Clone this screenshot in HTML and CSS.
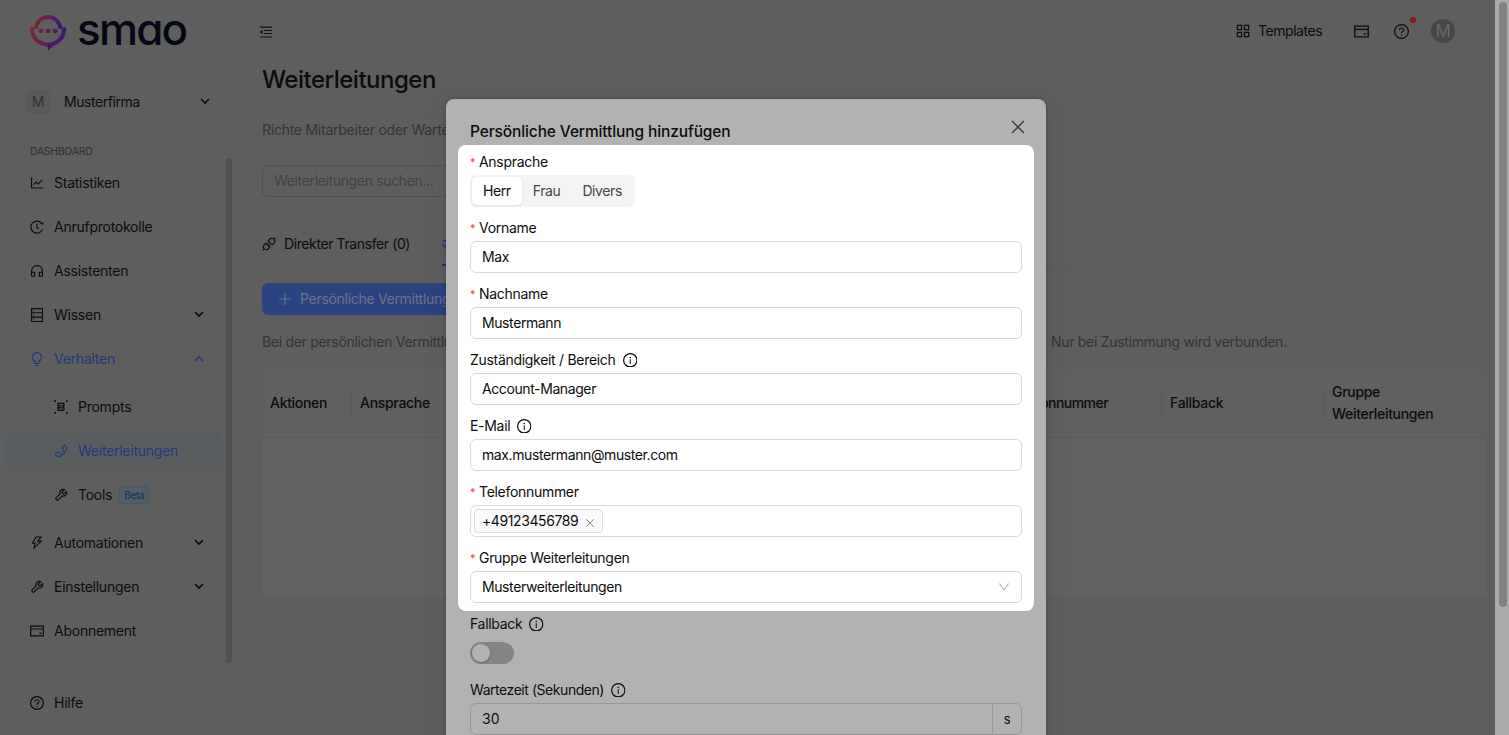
FILE: index.html
```html
<!DOCTYPE html>
<html lang="de">
<head>
    <meta charset="UTF-8">
    <meta name="viewport" content="width=device-width, initial-scale=1.0">
    <title>Weiterleitungen</title>
    <link rel="stylesheet" href="styles.css">
</head>
<body>
    <!-- Icons -->
    <svg class="sprite">
        <defs>
            <linearGradient id="logo-gradient" x1="0" x2="1" y1="0.3" y2="0.5">
                <stop offset="0" stop-color="#7a2a30"/>
                <stop offset="0.4" stop-color="#6e1a56"/>
                <stop offset="1" stop-color="#3a1a78"/>
            </linearGradient>
        </defs>
        <symbol id="i-chart" viewBox="64 64 896 896"><path d="M888 792H200V168c0-4.400-3.600-8-8-8h-56c-4.400 0-8 3.600-8 8v688c0 4.400 3.600 8 8 8h752c4.400 0 8-3.600 8-8v-56c0-4.400-3.600-8-8-8zM305.800 637.700c3.100 3.100 8.100 3.100 11.300 0l138.300-137.600L583 628.500c3.100 3.100 8.200 3.100 11.300 0l275.400-275.300c3.100-3.100 3.100-8.200 0-11.300l-39.600-39.600a8 8 0 0 0-11.300 0l-230 229.900L461.400 404a8 8 0 0 0-11.300 0L266.300 586.700a8 8 0 0 0 0 11.300l39.500 39.700z"/></symbol>
        <symbol id="i-history" viewBox="64 64 896 896"><path d="M826 300A385 385 0 1 0 872 650M500 310V535L640 640" fill="none" stroke="currentColor" stroke-width="72"/><path d="M745 325L905 365L915 190Z"/></symbol>
        <symbol id="i-headphones" viewBox="64 64 896 896"><path d="M164 850V520C164 320 310 164 512 164S860 320 860 520V850H660V590H850M174 590H364V850H164" fill="none" stroke="currentColor" stroke-width="74" stroke-linejoin="round"/></symbol>
        <symbol id="i-database" viewBox="64 64 896 896"><path d="M164 100H860V924H164ZM164 370H860M164 650H860" fill="none" stroke="currentColor" stroke-width="72"/><path d="M270 205h65v65h-65zM270 477h65v65h-65zM270 755h65v65h-65z"/></symbol>
        <symbol id="i-bulb" viewBox="64 64 896 896"><path d="M632 888H392c-4.400 0-8 3.600-8 8v32c0 17.700 14.300 32 32 32h192c17.700 0 32-14.300 32-32v-32c0-4.400-3.600-8-8-8zM512 64c-181.100 0-328 146.900-328 328 0 121.400 66 227.400 164 284.100V792c0 17.700 14.300 32 32 32h264c17.700 0 32-14.300 32-32V676.100c98-56.700 164-162.700 164-284.100 0-181.100-146.900-328-328-328zm127.900 549.800L604 634.600V752H420V634.600l-35.900-20.800C305.400 568.300 256 484.500 256 392c0-141.400 114.600-256 256-256s256 114.600 256 256c0 92.500-49.400 176.300-128.100 221.800z"/></symbol>
        <symbol id="i-prompts" viewBox="64 64 896 896"><path d="M80 80h110v110H80zM834 80h110v110H834zM80 834h110v110H80zM834 834h110v110H834z"/><path d="M325 285H700V430H325ZM325 570H700V730H325ZM345 430V570M680 430V570" fill="none" stroke="currentColor" stroke-width="76"/></symbol>
        <symbol id="i-phone" viewBox="64 64 896 896"><path d="M877.100 238.700L770.600 132.300c-13-13-30.400-20.300-48.800-20.300s-35.800 7.200-48.800 20.300L558.300 246.800c-13 13-20.300 30.500-20.300 48.900 0 18.500 7.200 35.800 20.300 48.900l89.600 89.700a405.460 405.460 0 0 1-86.400 127.300c-36.700 36.900-79.600 66-127.200 86.600l-89.600-89.700c-13-13-30.400-20.300-48.800-20.300a68.200 68.200 0 0 0-48.800 20.300L132.300 673c-13 13-20.300 30.500-20.300 48.900 0 18.500 7.200 35.800 20.300 48.900l106.400 106.400c22.200 22.200 52.800 34.900 84.200 34.900 6.500 0 12.800-.5 19.200-1.600 132.400-21.800 263.800-92.300 369.900-198.300C818 606 888.400 474.600 910.400 342.100c6.300-37.600-6.300-76.300-33.300-103.400zm-37.600 91.500c-19.500 117.900-82.900 235.500-178.400 331s-213 158.900-330.900 178.400c-14.800 2.500-30-2.500-40.800-13.200L184.900 721.900 295.700 611l119.800 120 .9.9 21.600-8a481.290 481.290 0 0 0 285.700-285.800l8-21.600-120.800-120.700 110.800-110.900 104.500 104.500c10.800 10.800 15.800 26 13.300 40.800z"/></symbol>
        <symbol id="i-tool" viewBox="64 64 896 896"><path d="M876.600 239.500c-.5-.9-1.200-1.800-2-2.500-5-5-13.100-5-18.100 0L684.200 409.300l-67.900-67.900L788.700 169c.8-.8 1.400-1.600 2-2.500 3.600-6.100 1.600-13.900-4.500-17.500-98.200-58-226.800-44.700-311.300 39.700-67 67-89.200 162-66.500 247.400l-293 293c-3 3-2.800 7.900.3 11l169.700 169.700c3.100 3.100 8.100 3.300 11 .3l292.900-292.900c85.500 22.800 180.500.7 247.600-66.400 84.400-84.500 97.700-213.100 39.700-311.300zM786 499.800c-58.100 58.100-145.300 69.300-214.600 33.600l-8.800 8.800-.1-.1-274 274.100-79.200-79.200 230.100-230.100s0 .1.1.1l52.800-52.800c-35.700-69.300-24.500-156.500 33.600-214.600a184.200 184.200 0 0 1 144-53.500L537 318.900a32 32 0 0 0 0 45.300l124.500 124.500a32 32 0 0 0 45.300 0l132.800-132.800c3.700 51.800-14.400 104.800-53.600 143.900z"/></symbol>
        <symbol id="i-bolt" viewBox="64 64 896 896"><path d="M848 359.300H627.700L825.800 109c4.100-5.300.4-13-6.300-13H436c-2.800 0-5.500 1.500-6.900 4L170 547.500c-3.100 5.300.7 12 6.900 12h174.400l-89.400 357.600c-1.900 7.800 7.500 13.300 13.300 7.700L853.500 373c5.200-4.900 1.700-13.700-5.500-13.700zM378.200 732.500l60.300-241H281.100l189.600-327.400h224.600L487 427.400h211L378.200 732.500z"/></symbol>
        <symbol id="i-card" viewBox="64 64 896 896"><path d="M110 196H914V828H110ZM110 385H914" fill="none" stroke="currentColor" stroke-width="76"/><path d="M650 620h145v76H650z"/></symbol>
        <symbol id="i-help" viewBox="64 64 896 896"><circle cx="512" cy="512" r="410" fill="none" stroke="currentColor" stroke-width="76"/><path d="M623.600 316.700C593.600 290.400 554 276 512 276s-81.600 14.500-111.600 40.700C369.200 344 352 380.700 352 420v7.600c0 4.400 3.600 8 8 8h48c4.400 0 8-3.600 8-8V420c0-44.100 43.100-80 96-80s96 35.900 96 80c0 31.100-22 59.600-56.100 72.700-21.200 8.100-39.200 22.300-52.100 40.900-13.100 19-19.900 41.800-19.900 64.900V620c0 4.400 3.600 8 8 8h48c4.400 0 8-3.600 8-8v-22.700a48.300 48.300 0 0 1 30.900-44.800c59-22.700 97.100-74.700 97.100-132.500.1-39.300-17.100-76-48.300-103.300zM472 732a40 40 0 1 0 80 0 40 40 0 1 0-80 0z"/></symbol>
        <symbol id="i-info" viewBox="64 64 896 896"><circle cx="512" cy="512" r="410" fill="none" stroke="currentColor" stroke-width="76"/><path d="M464 336a48 48 0 1 0 96 0 48 48 0 1 0-96 0zM480 448h64v288h-64z"/></symbol>
        <symbol id="i-apps" viewBox="64 64 896 896"><path d="M150 150H420V420H150ZM604 150H874V420H604ZM150 604H420V874H150ZM604 604H874V874H604Z" fill="none" stroke="currentColor" stroke-width="74"/></symbol>
        <symbol id="i-fold" viewBox="64 64 896 896"><path d="M120 160H904V232H120ZM408 378H904V450H408ZM408 574H904V646H408ZM120 792H904V864H120ZM115 512L300 370V654Z"/></symbol>
        <symbol id="i-api" viewBox="64 64 896 896"><path d="M460 310L580 190Q700 90 820 205Q935 325 835 445L715 565ZM310 460L190 580Q90 700 205 820Q325 935 445 835L565 715ZM830 195L925 100M195 830L100 925M395 540L475 460M490 635L570 555" fill="none" stroke="currentColor" stroke-width="72"/></symbol>
        <symbol id="i-swap" viewBox="64 64 896 896"><path d="M100 380H900L700 180M924 640H124L324 840" fill="none" stroke="currentColor" stroke-width="76"/></symbol>
        <symbol id="i-chevron" viewBox="0 0 10 10"><path d="M1 3L5 7L9 3" fill="none" stroke="currentColor" stroke-width="1.600"/></symbol>
        <symbol id="i-down" viewBox="64 64 896 896"><path d="M884 256h-75c-5.100 0-9.900 2.500-12.900 6.600L512 654.200 227.900 262.600c-3-4.100-7.800-6.600-12.900-6.600h-75c-6.500 0-10.300 7.400-6.500 12.700l352.600 486.100c12.800 17.600 39 17.600 51.700 0l352.600-486.100c3.900-5.300.1-12.700-6.400-12.700z"/></symbol>
        <symbol id="i-close" viewBox="0 0 16 16"><path d="M2 2L14 14M14 2L2 14" fill="none" stroke="currentColor" stroke-width="1.400"/></symbol>
        <symbol id="i-plus" viewBox="0 0 14 14"><path d="M7 1V13M1 7H13" fill="none" stroke="currentColor" stroke-width="1.200"/></symbol>
    </svg>

    <div class="app">
        <aside class="sidebar">
            <div class="logo">
                <svg class="logo-mark" viewBox="0 0 38 38">
                    <g fill="none" stroke="url(#logo-gradient)" stroke-width="4">
                        <path d="M6.600 14.700C8 7.500 12.500 3 19 3S30.200 7.500 31.500 14.700"/>
                        <path d="M1.200 15.200H5.200M2.900 15A16 15.500 0 0 0 35.100 15M32.500 15.200H37"/>
                    </g>
                    <path d="M18.500 31L28 28L19 37Z" fill="#4c1866"/>
                    <circle cx="12" cy="17" r="2.300" fill="#6e1c4a"/>
                    <circle cx="19" cy="17" r="2.300" fill="#5e1a58"/>
                    <circle cx="26" cy="17" r="2.300" fill="#4a1a68"/>
                </svg>
                <span class="logo-text">smao</span>
            </div>
            <div class="company">
                <span class="company-badge">M</span>
                <span class="company-name">Musterfirma</span>
                <svg class="chevron"><use href="#i-chevron"/></svg>
            </div>
            <div class="nav-title">DASHBOARD</div>
            <div class="nav-area">
                <nav class="nav">
                    <a class="nav-item"><svg class="icon"><use href="#i-chart"/></svg><span>Statistiken</span></a>
                    <a class="nav-item"><svg class="icon"><use href="#i-history"/></svg><span>Anrufprotokolle</span></a>
                    <a class="nav-item"><svg class="icon"><use href="#i-headphones"/></svg><span>Assistenten</span></a>
                    <a class="nav-item"><svg class="icon"><use href="#i-database"/></svg><span>Wissen</span><svg class="chevron"><use href="#i-chevron"/></svg></a>
                    <a class="nav-item open"><svg class="icon"><use href="#i-bulb"/></svg><span>Verhalten</span><svg class="chevron up"><use href="#i-chevron"/></svg></a>
                    <div class="subnav">
                        <a class="nav-item"><svg class="icon"><use href="#i-prompts"/></svg><span>Prompts</span></a>
                        <a class="nav-item active"><svg class="icon"><use href="#i-phone"/></svg><span>Weiterleitungen</span></a>
                        <a class="nav-item"><svg class="icon"><use href="#i-tool"/></svg><span>Tools</span><span class="beta">Beta</span></a>
                    </div>
                    <a class="nav-item"><svg class="icon"><use href="#i-bolt"/></svg><span>Automationen</span><svg class="chevron"><use href="#i-chevron"/></svg></a>
                    <a class="nav-item"><svg class="icon"><use href="#i-tool"/></svg><span>Einstellungen</span><svg class="chevron"><use href="#i-chevron"/></svg></a>
                    <a class="nav-item"><svg class="icon"><use href="#i-card"/></svg><span>Abonnement</span></a>
                </nav>
                <div class="nav-scroll"></div>
            </div>
            <a class="nav-item help"><svg class="icon"><use href="#i-help"/></svg><span>Hilfe</span></a>
        </aside>

        <main class="main">
            <header class="topbar">
                <svg class="icon fold"><use href="#i-fold"/></svg>
                <div class="topbar-right">
                    <svg class="icon"><use href="#i-apps"/></svg>
                    <span class="templates">Templates</span>
                    <svg class="icon top-card"><use href="#i-card"/></svg>
                    <span class="top-help"><svg class="icon"><use href="#i-help"/></svg><i class="dot"></i></span>
                    <span class="avatar">M</span>
                </div>
            </header>
            <h1>Weiterleitungen</h1>
            <p class="intro">Richte Mitarbeiter oder Warte</p>
            <div class="search">Weiterleitungen suchen...</div>
            <div class="tabs">
                <div class="tab"><svg class="icon"><use href="#i-api"/></svg><span>Direkter Transfer (0)</span></div>
                <div class="tab tab-active"><svg class="icon"><use href="#i-swap"/></svg></div>
            </div>
            <button class="add-button"><svg class="icon"><use href="#i-plus"/></svg><span>Persönliche Vermittlung</span></button>
            <p class="hint"><span class="hint-start">Bei der persönlichen Vermittlung</span><span>Nur bei Zustimmung wird verbunden.</span></p>
            <div class="table">
                <div class="table-head">
                    <div class="th">Aktionen</div>
                    <div class="th">Ansprache</div>
                    <div class="th th-phone">Telefonnummer</div>
                    <div class="th">Fallback</div>
                    <div class="th">Gruppe Weiterleitungen</div>
                </div>
                <div class="table-body"></div>
            </div>
        </main>

        <div class="page-scroll"><div class="page-thumb"></div></div>
    </div>

    <div class="modal">
        <div class="modal-head">
            <h2>Persönliche Vermittlung hinzufügen</h2>
            <svg class="close"><use href="#i-close"/></svg>
        </div>
        <div class="highlight">
            <div class="field">
                <label class="required">Ansprache</label>
                <div class="segmented">
                    <span class="segment selected">Herr</span>
                    <span class="segment">Frau</span>
                    <span class="segment">Divers</span>
                </div>
            </div>
            <div class="field">
                <label class="required">Vorname</label>
                <div class="input">Max</div>
            </div>
            <div class="field">
                <label class="required">Nachname</label>
                <div class="input">Mustermann</div>
            </div>
            <div class="field">
                <label>Zuständigkeit / Bereich<svg class="icon info"><use href="#i-info"/></svg></label>
                <div class="input">Account-Manager</div>
            </div>
            <div class="field">
                <label>E-Mail<svg class="icon info"><use href="#i-info"/></svg></label>
                <div class="input">max.mustermann@muster.com</div>
            </div>
            <div class="field">
                <label class="required">Telefonnummer</label>
                <div class="input tags"><span class="tag">+49123456789<svg class="tag-close"><use href="#i-close"/></svg></span></div>
            </div>
            <div class="field">
                <label class="required">Gruppe Weiterleitungen</label>
                <div class="input select">Musterweiterleitungen<svg class="select-arrow"><use href="#i-down"/></svg></div>
            </div>
        </div>
        <div class="rest">
            <div class="field">
                <label>Fallback<svg class="icon info"><use href="#i-info"/></svg></label>
                <div class="switch-row"><div class="switch"></div></div>
            </div>
            <div class="field">
                <label class="wait">Wartezeit (Sekunden)<svg class="icon info"><use href="#i-info"/></svg></label>
                <div class="input number"><span class="number-value">30</span><span class="addon">s</span></div>
            </div>
        </div>
    </div>
</body>
</html>
```
FILE: styles.css
```css
* {
    box-sizing: border-box;
}
body {
    margin: 0;
    height: 735px;
    overflow: hidden;
    position: relative;
    background: #5e5e5e;
    color: #0c0c0c;
    font-family: Inter, "Liberation Sans", sans-serif;
    font-size: 14px;
    line-height: 22px;
    letter-spacing: -0.3px;
}
svg {
    flex: none;
    fill: currentColor;
}
.sprite {
    position: absolute;
    width: 0;
    height: 0;
}
.icon {
    width: 14px;
    height: 14px;
}
.app {
    display: flex;
    height: 735px;
}

/* Sidebar */
.sidebar {
    width: 238px;
    flex: none;
    border-right: 1px solid #5a5a5a;
}
.logo {
    display: flex;
    align-items: center;
    height: 64px;
    padding-left: 29px;
}
.logo-mark {
    width: 38px;
    height: 38px;
    margin-top: 2px;
}
.logo-text {
    margin: -7px 0 0 10px;
    font-size: 44px;
    line-height: 50px;
    font-weight: 500;
    letter-spacing: -1.8px;
    font-feature-settings: "cv11";
    color: #040814;
}
.company {
    display: flex;
    align-items: center;
    height: 24px;
    margin-top: 26px;
    padding: 0 27px 0 26px;
}
.company-badge {
    width: 24px;
    height: 24px;
    border-radius: 5px;
    background: #595959;
    color: #323232;
    line-height: 24px;
    text-align: center;
}
.company-name {
    margin-left: 14px;
    letter-spacing: -0.45px;
}
.chevron {
    width: 10px;
    height: 10px;
    margin-left: auto;
    margin-top: -2px;
}
.up {
    margin-top: 0;
    transform: rotate(180deg);
}
.nav-title {
    margin-top: 27px;
    margin-bottom: -1px;
    padding-left: 30px;
    font-size: 10.5px;
    color: #303030;
}
.nav-area {
    display: flex;
    height: 510px;
}
.nav {
    width: 226px;
    padding-top: 1px;
}
.nav-scroll {
    width: 6px;
    height: 505px;
    margin-top: -4px;
    border-radius: 3px;
    background: #505050;
}
.nav-item {
    display: flex;
    align-items: center;
    height: 40px;
    margin: 0 4px 4px 5px;
    padding: 0 18px 0 25px;
    border-radius: 8px;
    letter-spacing: -0.25px;
}
.nav-item .icon {
    margin-right: 10px;
}
.subnav {
    padding: 4px 0;
}
.subnav .nav-item {
    padding-left: 49px;
}
.open {
    color: #24397c;
}
.active {
    background: #595d60;
    color: #24397c;
}
.beta {
    margin-left: 7px;
    padding: 0 4px;
    height: 18px;
    border: 1px solid #385a78;
    border-radius: 4px;
    background: #565c60;
    color: #12386e;
    font-size: 10px;
    font-weight: 500;
    line-height: 16px;
    letter-spacing: -0.4px;
}
.help {
    margin-top: 11px;
}

/* Main area */
.main {
    width: 1257px;
    padding: 0 9px 0 24px;
}
.topbar {
    display: flex;
    align-items: center;
    height: 62px;
}
.topbar .fold {
    margin: 2px 0 0 -3px;
}
.topbar-right {
    display: flex;
    align-items: center;
    margin-left: auto;
    margin-right: 31px;
}
.templates {
    width: 64px;
    margin-left: 8px;
    letter-spacing: -0.45px;
    white-space: nowrap;
}
.top-card {
    margin-left: 32px;
    width: 15px;
    height: 15px;
}
.top-help {
    position: relative;
    display: flex;
    margin-left: 25px;
}
.top-help .icon {
    width: 15px;
    height: 15px;
}
.dot {
    position: absolute;
    top: -7px;
    right: -7px;
    width: 6px;
    height: 6px;
    border-radius: 50%;
    background: #851619;
}
.avatar {
    width: 24px;
    height: 24px;
    margin-left: 22px;
    border-radius: 50%;
    background: #464646;
    color: #666;
    font-size: 17px;
    line-height: 24px;
    text-align: center;
}
h1 {
    margin: 0;
    height: 36px;
    font-size: 24px;
    line-height: 36px;
    font-weight: 500;
    letter-spacing: -0.5px;
}
.intro {
    margin: 21px 0 0;
    color: #343434;
    letter-spacing: -0.25px;
}
.search {
    width: 400px;
    height: 32px;
    margin-top: 24px;
    padding: 0 11px;
    border: 1px solid #505050;
    border-radius: 6px;
    line-height: 30px;
    color: #424242;
    letter-spacing: -0.35px;
}
.tabs {
    display: flex;
    height: 46px;
    margin-top: 24px;
    border-bottom: 1px solid #5a5a5a;
}
.tab {
    display: flex;
    align-items: center;
    gap: 8px;
    width: 180px;
    white-space: nowrap;
    letter-spacing: -0.4px;
}
.tab-active {
    border-bottom: 2px solid #1c3888;
    color: #1c3888;
}
.add-button {
    display: flex;
    align-items: center;
    gap: 8px;
    width: 320px;
    height: 32px;
    margin-top: 16px;
    padding: 0 16px;
    border: 0;
    border-radius: 6px;
    background: #2b437f;
    color: #6b7288;
    font: inherit;
    letter-spacing: inherit;
}
.hint {
    display: flex;
    margin: 16px 0 0;
    color: #343434;
}
.hint-start {
    width: 789px;
}
.table {
    margin-top: 16px;
}
.table-head {
    display: grid;
    grid-template-columns: 90px 650px 160px 162px 162px;
    align-items: center;
    height: 69px;
    border-bottom: 1px solid #5a5a5a;
    border-radius: 8px 8px 0 0;
    background: #606060;
    font-weight: 500;
}
.th {
    display: flex;
    align-items: center;
    min-height: 22px;
    padding: 0 8px;
    border-right: 1px solid #595959;
}
.th-phone {
    letter-spacing: -0.55px;
}
.th:last-child {
    border: 0;
}
.table-body {
    height: 158px;
    background: #626262;
}
.page-scroll {
    width: 14px;
    padding: 2px 0 0 4px;
    background: #aaa;
}
.page-thumb {
    width: 8px;
    height: 605px;
    border-radius: 4px;
    background: #828282;
}

/* Dialog */
.modal {
    position: absolute;
    top: 99px;
    left: 446px;
    width: 600px;
    height: 660px;
    padding: 0 12px;
    border-radius: 8px;
    background: #b2b2b2;
    box-shadow: 0 0 3px rgba(0, 0, 0, 0.35), 0 6px 28px rgba(0, 0, 0, 0.08);
}
.modal-head {
    display: flex;
    justify-content: space-between;
    height: 46px;
    padding: 20px 8px 0 12px;
}
h2 {
    margin: 2px 0 0;
    font-size: 15.5px;
    line-height: 22px;
    font-weight: 500;
    letter-spacing: -0.12px;
}
.close {
    width: 16px;
    height: 16px;
    color: #3a3a3a;
}
.highlight {
    height: 466px;
    padding: 6px 12px 8px;
    border-radius: 8px;
    background: #fff;
}
.rest {
    padding: 2px 12px;
}
.field {
    height: 66px;
}
label {
    display: flex;
    align-items: center;
    height: 22px;
    margin-bottom: 2px;
    line-height: 22px;
}
.required::before {
    content: "*";
    width: 9px;
    color: #ff3b3e;
    font-size: 11px;
}
.info {
    width: 14.5px;
    height: 14.5px;
    margin-left: 7px;
}
.wait {
    letter-spacing: -0.45px;
}
.input {
    display: flex;
    align-items: center;
    height: 32px;
    padding: 0 11px;
    border: 1px solid #d9d9d9;
    border-radius: 6px;
    letter-spacing: -0.4px;
}
.segmented {
    display: inline-flex;
    height: 32px;
    padding: 2px;
    border-radius: 6px;
    background: #f4f4f4;
}
.segment {
    padding: 0 11px;
    line-height: 28px;
    letter-spacing: -0.4px;
    color: #454545;
}
.selected {
    border-radius: 5px;
    background: #fff;
    color: #0c0c0c;
    box-shadow: 0 1px 3px rgba(0, 0, 0, 0.1);
}
.tags {
    padding: 0 3px;
}
.tag {
    display: flex;
    align-items: center;
    height: 24px;
    padding: 0 7px;
    border: 1px solid #dcdcdc;
    border-radius: 4px;
    background: #fafafa;
}
.tag-close {
    width: 10px;
    height: 10px;
    margin: 4px 0 0 7px;
    color: #777;
}
.select {
    justify-content: space-between;
}
.select-arrow {
    width: 12px;
    height: 12px;
    color: #b0b0b0;
}
.switch-row {
    padding-top: 5px;
}
.switch {
    width: 44px;
    height: 22px;
    padding: 2px;
    border-radius: 11px;
    background: #858585;
}
.switch::before {
    content: "";
    display: block;
    width: 18px;
    height: 18px;
    border-radius: 50%;
    background: #b2b2b2;
    box-shadow: 0 1px 3px rgba(0, 0, 0, 0.2);
}
.number {
    padding: 0;
    border-color: #989898;
}
.number-value {
    flex: 1;
    padding-left: 11px;
    letter-spacing: 0;
}
.addon {
    width: 29px;
    height: 30px;
    border-left: 1px solid #989898;
    font-size: 13px;
    line-height: 31px;
    text-align: center;
}
```
